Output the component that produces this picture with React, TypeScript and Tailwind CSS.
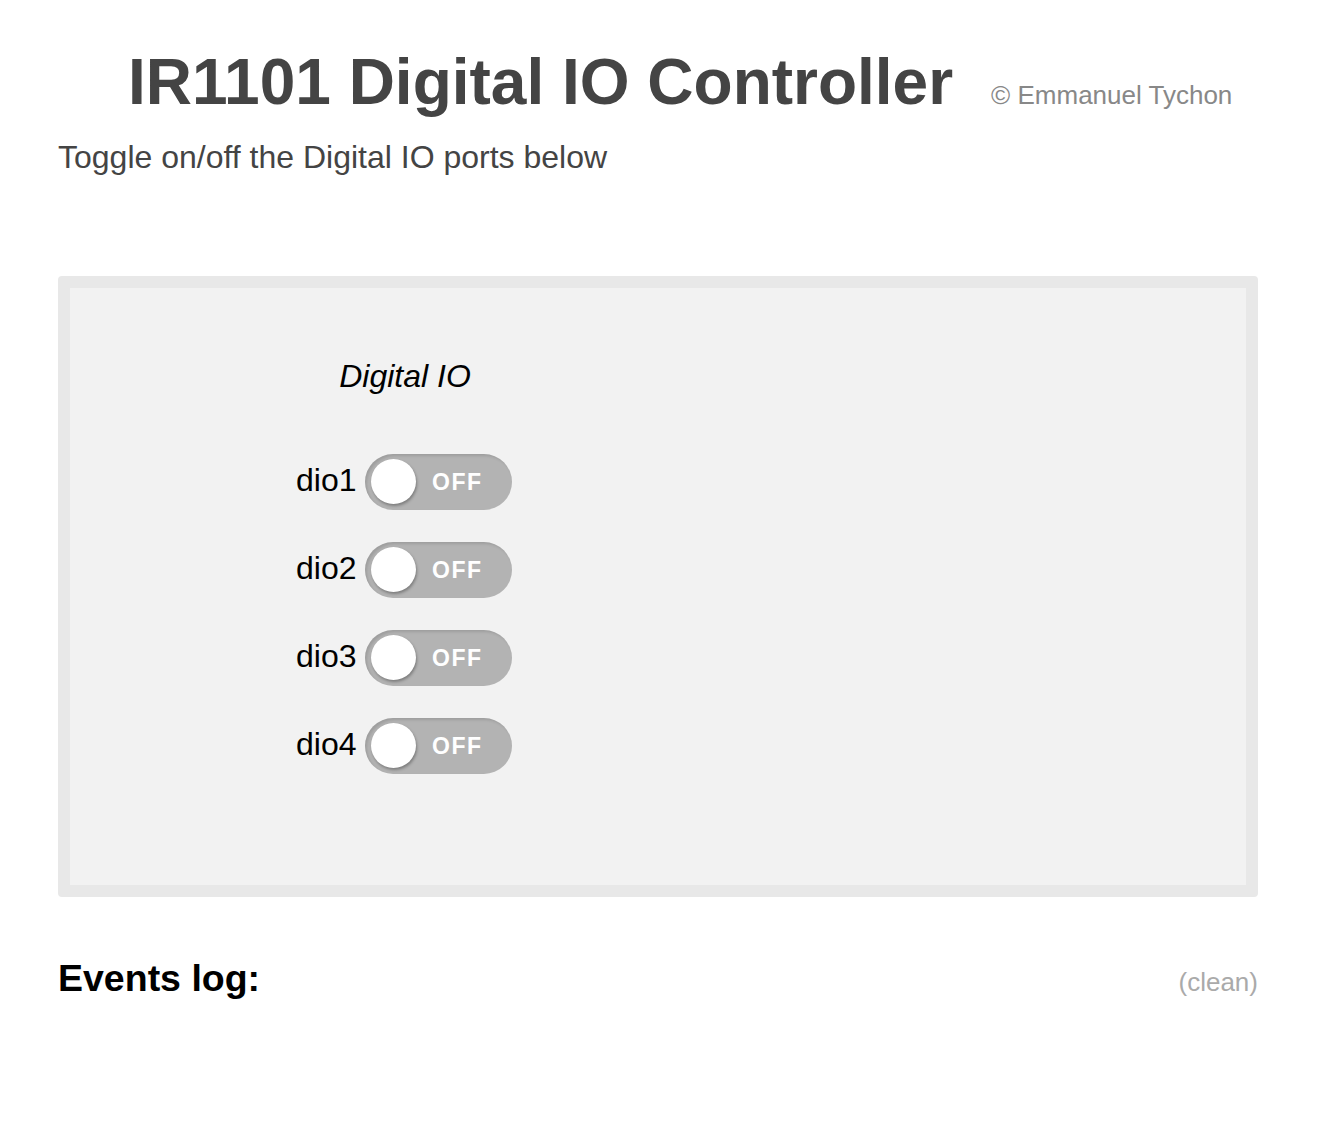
import React from "react";

const ports = ["dio1", "dio2", "dio3", "dio4"];

function Toggle() {
  return (
    <div className="relative w-[147px] h-[56px] rounded-full bg-[#b3b3b3] flex items-center shadow-[inset_2px_2px_3px_rgba(0,0,0,0.12)]">
      <div className="absolute left-[6px] top-[5px] w-[45px] h-[45px] rounded-full bg-white shadow-[1px_2px_3px_rgba(0,0,0,0.3)]" />
      <span className="ml-[67px] text-white font-bold text-[23px] tracking-[1.5px] leading-none">OFF</span>
    </div>
  );
}

export default function App() {
  return (
    <div className="bg-white min-h-[1148px] w-[1342px]" style={{ fontFamily: '"Liberation Sans", Arial, sans-serif' }}>
      <div className="w-[1200px] ml-[58px]">
        <div className="flex items-baseline pt-[42px] pl-[70px]">
          <h1 className="text-[64px] font-bold text-[#444] leading-[80px]">IR1101 Digital IO Controller</h1>
          <span className="ml-[38px] text-[26px] text-[#888]">© Emmanuel Tychon</span>
        </div>
        <p className="text-[32px] text-[#444] leading-[38px] mt-[16px]">Toggle on/off the Digital IO ports below</p>
        <div className="mt-[100px] border-[12px] border-[#e8e8e8] bg-[#f2f2f2] rounded-[4px] h-[621px]">
          <div className="pl-[226px] pt-[69px]">
            <div className="w-[218px] text-center italic text-[32px] text-black leading-[38px]">Digital IO</div>
            <div className="mt-[59px] flex flex-col gap-[32px]">
              {ports.map((p) => (
                <div key={p} className="flex items-center">
                  <span className="w-[62px] text-[32px] text-black leading-none -mt-[4px]">{p}</span>
                  <div className="ml-[7px]"><Toggle /></div>
                </div>
              ))}
            </div>
          </div>
        </div>
        <div className="mt-[53px] flex items-baseline justify-between">
          <h2 className="text-[37.5px] font-bold text-black">Events log:</h2>
          <span className="text-[26px] text-[#aaa]">(clean)</span>
        </div>
      </div>
    </div>
  );
}
